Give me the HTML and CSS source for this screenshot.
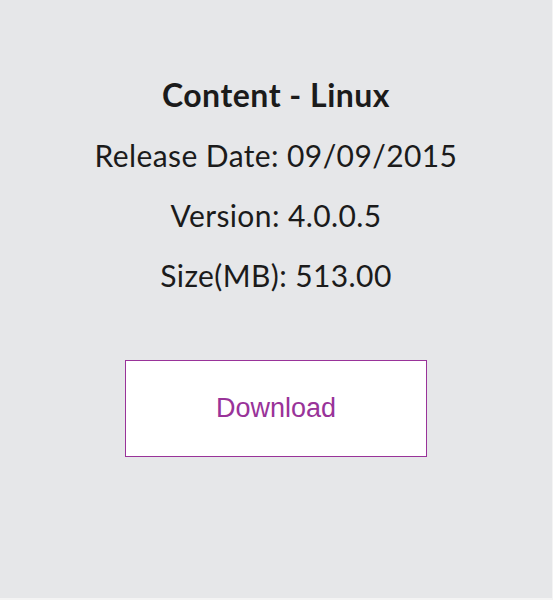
FILE: index.html
```html
<!DOCTYPE html>
<html lang="en">

<head>
    <meta charset="UTF-8">
    <meta name="viewport" content="width=device-width, initial-scale=1.0">
    <title>Content - Linux</title>
    <link rel="stylesheet" href="styles.css">
</head>

<body>
    <!-- Download card -->
    <main class="card">
        <h1 class="card-title">Content - Linux</h1>
        <p class="card-info">Release Date: 09/09/2015</p>
        <p class="card-info">Version: 4.0.0.5</p>
        <p class="card-info">Size(MB): 513.00</p>
        <a href="#" class="btn-download">Download</a>
    </main>
</body>

</html>
```

FILE: styles.css
```css
/* Reset */
* {
    margin: 0;
    padding: 0;
    box-sizing: border-box;
}

:root {
    --cor-texto: #1b1b1b;
    --cor-card: #e6e7e9;
    --cor-fundo: #f4f4f4;
    --cor-roxo: #993399;
}

body {
    background-color: var(--cor-fundo);
    font-family: 'Lato', 'Liberation Sans', Arial, sans-serif;
    color: var(--cor-texto);
}

/* Card */
.card {
    width: 552px;
    height: 598px;
    background-color: var(--cor-card);
    display: flex;
    flex-direction: column;
    align-items: center;
    padding-top: 76px;
}

.card-title {
    font-size: 32px;
    font-weight: 700;
    letter-spacing: 0.5px;
    line-height: 38px;
    margin-bottom: 22px;
}

.card-info {
    font-size: 30px;
    font-weight: 400;
    letter-spacing: 0.4px;
    line-height: 38px;
    margin-bottom: 22px;
}

.btn-download {
    margin-top: 44px;
    width: 302px;
    height: 97px;
    display: flex;
    align-items: center;
    justify-content: center;
    background-color: #fff;
    border: 1px solid var(--cor-roxo);
    color: var(--cor-roxo);
    font-family: 'Liberation Sans', Arial, sans-serif;
    font-size: 27px;
    text-decoration: none;
}
```
